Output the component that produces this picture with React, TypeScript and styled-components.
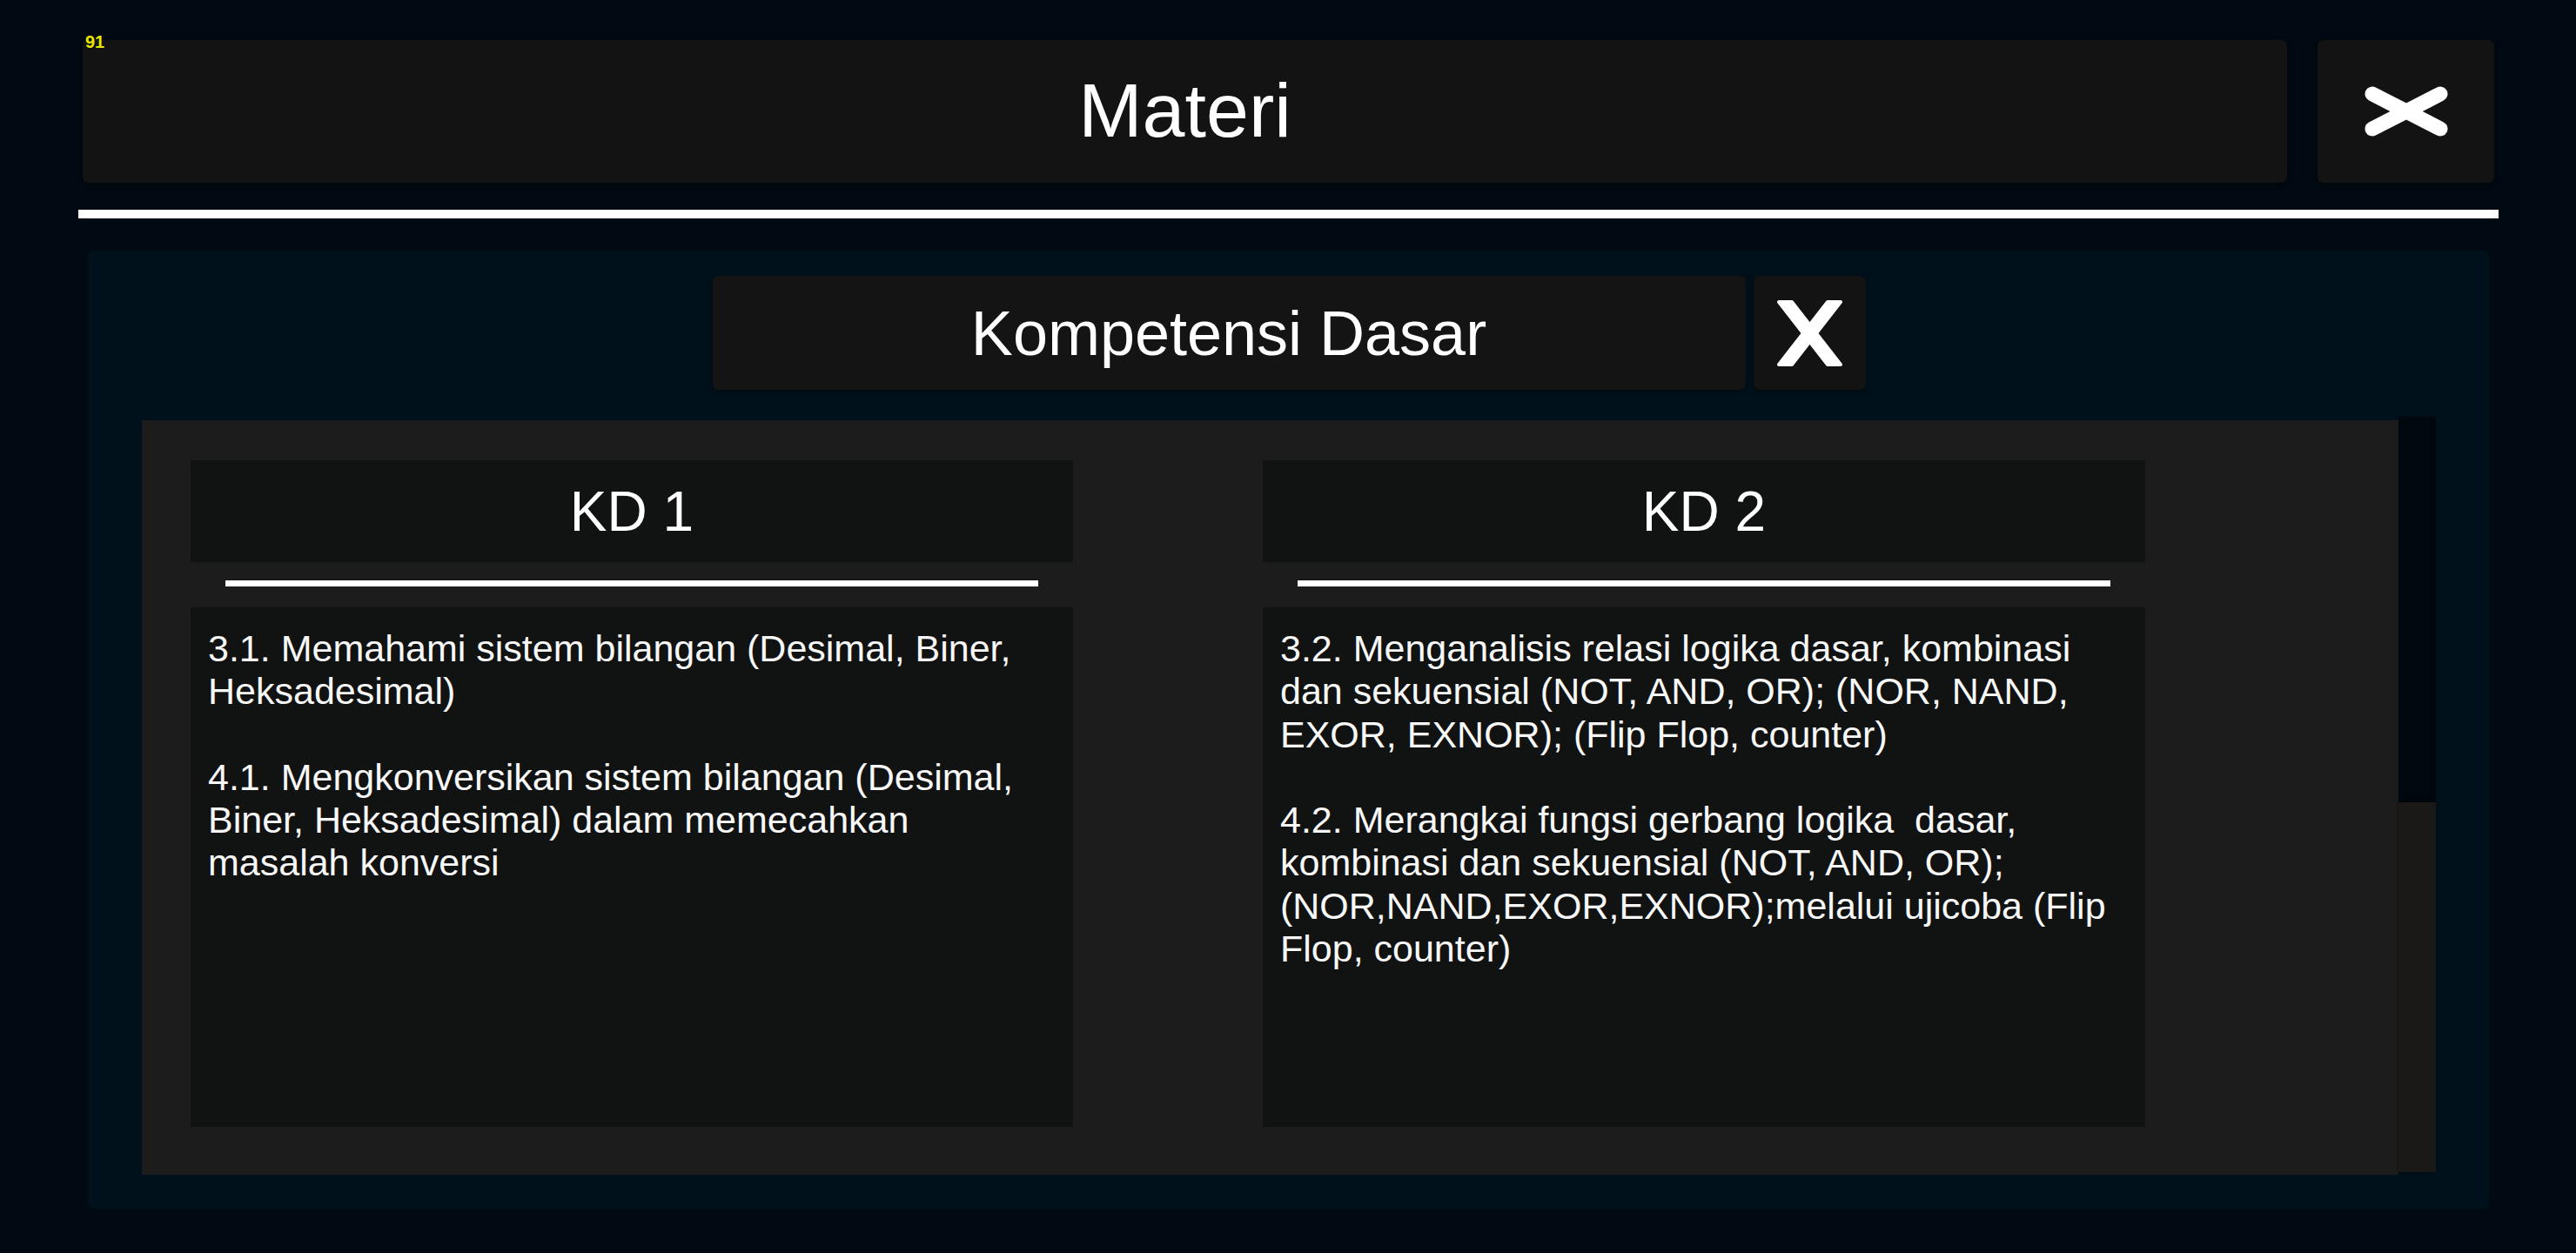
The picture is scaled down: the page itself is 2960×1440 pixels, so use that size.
import React from "react";
import styled, { createGlobalStyle } from "styled-components";

const GlobalStyle = createGlobalStyle`
  html, body {
    margin: 0;
    padding: 0;
    background: #010a12;
  }
  body {
    font-family: "Liberation Sans", Arial, sans-serif;
    color: #f4f4f4;
  }
`;

const Page = styled.div`
  position: relative;
  width: 2960px;
  height: 1440px;
  box-sizing: border-box;
  padding-top: 46px;
  background: #010a12;
  overflow: hidden;
`;

const FpsBadge = styled.div`
  position: absolute;
  top: 38px;
  left: 98px;
  font-size: 20px;
  line-height: 20px;
  font-weight: 700;
  color: #e9e600;
  z-index: 2;
`;

const TopRow = styled.div`
  display: flex;
  gap: 35px;
  margin: 0 94px 0 95px;
  height: 164px;
`;

const Bar = styled.div`
  background: #131313;
  border-radius: 7px;
  box-shadow: 0 2px 6px rgba(0, 0, 0, 0.45);
  display: flex;
  align-items: center;
  justify-content: center;
`;

const TitleBar = styled(Bar)`
  flex: 1;
`;

const Title = styled.h1`
  margin: 0 0 3px 0;
  font-size: 88px;
  line-height: 1;
  font-weight: 400;
  color: #ffffff;
`;

const CloseButton = styled(Bar)<{ $w: number }>`
  width: ${(p) => p.$w}px;
  flex: none;
`;

const Divider = styled.div`
  margin: 31px 89px 0 90px;
  height: 10px;
  background: #ffffff;
`;

const Panel = styled.div`
  margin: 37px 100px 0 101px;
  height: 1101px;
  box-sizing: border-box;
  padding: 29px 61px 0 62px;
  background: #00111b;
  border-radius: 8px;
  display: flex;
  flex-direction: column;
  align-items: center;
`;

const HeaderRow = styled.div`
  display: flex;
  gap: 9px;
  height: 131px;
`;

const SubTitleBar = styled(Bar)`
  width: 1187px;
  background: #141414;
`;

const SubTitle = styled.h2`
  margin: 0;
  font-size: 72px;
  line-height: 1;
  font-weight: 400;
  color: #ffffff;
`;

const ContentArea = styled.div`
  margin-top: 35px;
  display: flex;
  align-self: stretch;
`;

const ScrollBox = styled.div`
  width: 2593px;
  height: 867px;
  box-sizing: border-box;
  background: #1c1c1c;
  padding: 46px 56px 0 56px;
  display: grid;
  grid-template-columns: 1014px 1014px;
  column-gap: 218px;
  align-content: start;
`;

const ScrollTrack = styled.div`
  width: 43px;
  height: 868px;
  margin-top: -4px;
  background: #00080d;
  display: flex;
  flex-direction: column;
  justify-content: flex-end;
`;

const ScrollHandle = styled.div`
  height: 425px;
  background: #1a1918;
  box-shadow: 0 0 3px rgba(0, 0, 0, 0.6);
`;

const Column = styled.div`
  display: flex;
  flex-direction: column;
`;

const KdHeader = styled.div`
  height: 117px;
  background: #111212;
  display: flex;
  align-items: center;
  justify-content: center;
`;

const KdTitle = styled.h3`
  margin: 0;
  font-size: 64px;
  line-height: 1;
  font-weight: 400;
  color: #ffffff;
`;

const KdRule = styled.div`
  margin: 21px 40px 0 40px;
  height: 7px;
  background: #ffffff;
`;

const KdBody = styled.div`
  margin-top: 24px;
  height: 597px;
  box-sizing: border-box;
  background: #111212;
  padding: 23px 21px 0 20px;
  font-size: 43px;
  line-height: 49.3px;
  white-space: pre-wrap;
  color: #f8f8f8;
`;

const WideX = () => (
  <svg width="96" height="58" viewBox="0 0 96 58">
    <g stroke="#ffffff" strokeWidth="17" strokeLinecap="round">
      <line x1="9" y1="9" x2="87" y2="49" />
      <line x1="87" y1="9" x2="9" y2="49" />
    </g>
  </svg>
);

const BoldX = () => (
  <svg width="77" height="76" viewBox="0 0 77 76">
    <g fill="#ffffff" stroke="#ffffff" strokeWidth="4" strokeLinejoin="round">
      <polygon points="3,2 18,2 74,74 59,74" />
      <polygon points="59,2 74,2 18,74 3,74" />
    </g>
  </svg>
);

const kd = [
  {
    title: "KD 1",
    text:
      "3.1. Memahami sistem bilangan (Desimal, Biner, Heksadesimal)\n\n4.1. Mengkonversikan sistem bilangan (Desimal, Biner, Heksadesimal) dalam memecahkan masalah konversi",
  },
  {
    title: "KD 2",
    text:
      "3.2. Menganalisis relasi logika dasar, kombinasi dan sekuensial (NOT, AND, OR); (NOR, NAND, EXOR, EXNOR); (Flip Flop, counter)\n\n4.2. Merangkai fungsi gerbang logika  dasar, kombinasi dan sekuensial (NOT, AND, OR); (NOR,NAND,EXOR,EXNOR);melalui ujicoba (Flip Flop, counter)",
  },
];

export default function App() {
  return (
    <>
      <GlobalStyle />
      <Page>
        <FpsBadge>91</FpsBadge>
        <TopRow>
          <TitleBar>
            <Title>Materi</Title>
          </TitleBar>
          <CloseButton $w={203}>
            <WideX />
          </CloseButton>
        </TopRow>
        <Divider />
        <Panel>
          <HeaderRow>
            <SubTitleBar>
              <SubTitle>Kompetensi Dasar</SubTitle>
            </SubTitleBar>
            <CloseButton $w={129}>
              <BoldX />
            </CloseButton>
          </HeaderRow>
          <ContentArea>
            <ScrollBox>
              {kd.map((k) => (
                <Column key={k.title}>
                  <KdHeader>
                    <KdTitle>{k.title}</KdTitle>
                  </KdHeader>
                  <KdRule />
                  <KdBody>{k.text}</KdBody>
                </Column>
              ))}
            </ScrollBox>
            <ScrollTrack>
              <ScrollHandle />
            </ScrollTrack>
          </ContentArea>
        </Panel>
      </Page>
    </>
  );
}
